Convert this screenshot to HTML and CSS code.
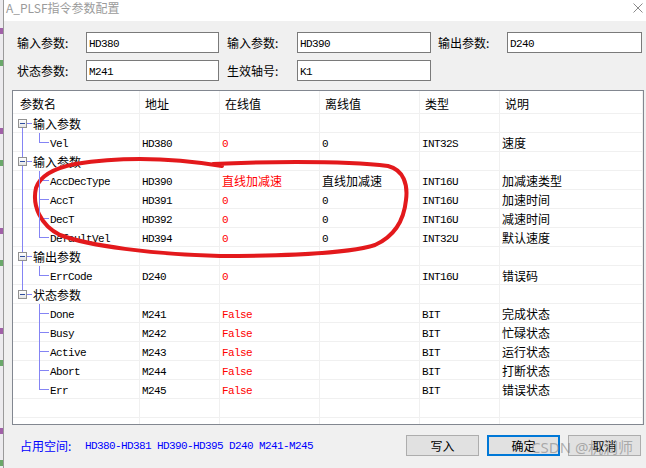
FILE: index.html
```html
<!DOCTYPE html>
<html lang="zh-CN">
<head>
<meta charset="utf-8">
<title>A_PLSF指令参数配置</title>
<link rel="stylesheet" href="styles.css">
</head>
<body>
<div class="screen">
  <div class="behind"></div>
  <div class="window">
    <div class="titlebar">
      <span class="title">A_PLSF指令参数配置</span>
      <svg class="close" width="10" height="10" viewBox="0 0 10 10"><path d="M0.5 0.5 L9.5 9.5 M9.5 0.5 L0.5 9.5" stroke="#8a8a8a" stroke-width="1" fill="none"/></svg>
    </div>
    <div class="content">
      <div class="fields">
        <span class="lbl">输入参数:</span><div class="box m">HD380</div>
        <span class="lbl l2">输入参数:</span><div class="box m">HD390</div>
        <span class="lbl l3">输出参数:</span><div class="box m">D240</div>
        <span class="lbl">状态参数:</span><div class="box m">M241</div>
        <span class="lbl l2">生效轴号:</span><div class="box m">K1</div>
      </div>

      <div class="table">
        <div class="row head">
          <div class="c">参数名</div><div class="c">地址</div><div class="c">在线值</div><div class="c">离线值</div><div class="c">类型</div><div class="c">说明</div>
        </div>

        <div class="row">
          <div class="c grp first"><i class="exp"></i>输入参数</div><div class="c"></div><div class="c"></div><div class="c"></div><div class="c"></div><div class="c"></div>
        </div>
        <div class="row">
          <div class="c leaf end m"><i class="trunk"></i>Vel</div><div class="c m">HD380</div><div class="c m red">0</div><div class="c m">0</div><div class="c m">INT32S</div><div class="c">速度</div>
        </div>

        <div class="row">
          <div class="c grp"><i class="exp"></i>输入参数</div><div class="c"></div><div class="c"></div><div class="c"></div><div class="c"></div><div class="c"></div>
        </div>
        <div class="row">
          <div class="c leaf m"><i class="trunk"></i>AccDecType</div><div class="c m">HD390</div><div class="c red">直线加减速</div><div class="c">直线加减速</div><div class="c m">INT16U</div><div class="c">加减速类型</div>
        </div>
        <div class="row">
          <div class="c leaf m"><i class="trunk"></i>AccT</div><div class="c m">HD391</div><div class="c m red">0</div><div class="c m">0</div><div class="c m">INT16U</div><div class="c">加速时间</div>
        </div>
        <div class="row">
          <div class="c leaf m"><i class="trunk"></i>DecT</div><div class="c m">HD392</div><div class="c m red">0</div><div class="c m">0</div><div class="c m">INT16U</div><div class="c">减速时间</div>
        </div>
        <div class="row">
          <div class="c leaf end m"><i class="trunk"></i>DefaultVel</div><div class="c m">HD394</div><div class="c m red">0</div><div class="c m">0</div><div class="c m">INT32U</div><div class="c">默认速度</div>
        </div>

        <div class="row">
          <div class="c grp"><i class="exp"></i>输出参数</div><div class="c"></div><div class="c"></div><div class="c"></div><div class="c"></div><div class="c"></div>
        </div>
        <div class="row">
          <div class="c leaf end m"><i class="trunk"></i>ErrCode</div><div class="c m">D240</div><div class="c m red">0</div><div class="c m"></div><div class="c m">INT16U</div><div class="c">错误码</div>
        </div>

        <div class="row">
          <div class="c grp last"><i class="exp"></i>状态参数</div><div class="c"></div><div class="c"></div><div class="c"></div><div class="c"></div><div class="c"></div>
        </div>
        <div class="row">
          <div class="c leaf m">Done</div><div class="c m">M241</div><div class="c m red">False</div><div class="c m"></div><div class="c m">BIT</div><div class="c">完成状态</div>
        </div>
        <div class="row">
          <div class="c leaf m">Busy</div><div class="c m">M242</div><div class="c m red">False</div><div class="c m"></div><div class="c m">BIT</div><div class="c">忙碌状态</div>
        </div>
        <div class="row">
          <div class="c leaf m">Active</div><div class="c m">M243</div><div class="c m red">False</div><div class="c m"></div><div class="c m">BIT</div><div class="c">运行状态</div>
        </div>
        <div class="row">
          <div class="c leaf m">Abort</div><div class="c m">M244</div><div class="c m red">False</div><div class="c m"></div><div class="c m">BIT</div><div class="c">打断状态</div>
        </div>
        <div class="row">
          <div class="c leaf end m">Err</div><div class="c m">M245</div><div class="c m red">False</div><div class="c m"></div><div class="c m">BIT</div><div class="c">错误状态</div>
        </div>

        <div class="row">
          <div class="c"></div><div class="c"></div><div class="c"></div><div class="c"></div><div class="c"></div><div class="c"></div>
        </div>
        <div class="row">
          <div class="c"></div><div class="c"></div><div class="c"></div><div class="c"></div><div class="c"></div><div class="c"></div>
        </div>
      </div>

      <div class="footer">
        <div class="usage"><span class="usage-label">占用空间:</span><span class="m">HD380-HD381 HD390-HD395 D240 M241-M245</span></div>
        <div class="buttons">
          <button class="btn">写入</button>
          <button class="btn default">确定</button>
          <button class="btn">取消</button>
        </div>
      </div>
    </div>
  </div>

  <svg class="mark" width="646" height="468" viewBox="0 0 646 468">
    <path d="M213 164 C250 162 340 160 388 166 C404 170 408 185 406 200 C404 220 395 236 375 245 C350 253 300 256 220 256 C150 254 90 246 60 235 C40 225 32 205 36 188 C40 176 55 168 75 164 C100 160 150 154 222 166" fill="none" stroke="#e3191c" stroke-width="4" stroke-linecap="round" stroke-linejoin="round"/>
  </svg>
  <div class="watermark">CSDN @机润师</div>
</div>
</body>
</html>
```

FILE: styles.css
```css
* { box-sizing: border-box; }

body {
  margin: 0;
  width: 646px;
  height: 468px;
  overflow: hidden;
  background: #f0f0f0;
  font-family: "Noto Sans CJK SC", "Microsoft YaHei", sans-serif;
  font-size: 12px;
  color: #000;
}

.screen {
  position: relative;
  display: flex;
  height: 468px;
}

.behind {
  width: 4px;
  border-right: 1px solid #9a9a9a;
  background: repeating-linear-gradient(to bottom,
    #ecebee 0, #ecebee 28px,
    #a060a8 28px, #a060a8 34px,
    #ecebee 34px, #ecebee 60px,
    #6aa86a 60px, #6aa86a 66px,
    #ecebee 66px, #ecebee 100px);
}

.window {
  flex: 1;
  display: flex;
  flex-direction: column;
  background: #f0f0f0;
}

.titlebar {
  height: 21px;
  background: #fff;
  display: flex;
  justify-content: space-between;
  align-items: flex-start;
  padding: 0 3px 0 2px;
}

.title {
  color: #9b9b9b;
  line-height: 16px;
  font-size: 12px;
}

.close {
  margin-top: 3px;
}

.content {
  padding: 11px 2px 0 8px;
}

.fields {
  display: grid;
  grid-template-columns: 69px 133px 78px 134px 76px 135px;
  grid-auto-rows: 21px;
  row-gap: 7px;
  padding-left: 5px;
}

.lbl {
  display: flex;
  align-items: center;
}

.l2 { padding-left: 8px; }
.l3 { padding-left: 7px; }

.box {
  background: #fff;
  border: 1px solid #7a7a7a;
  display: flex;
  align-items: center;
  padding-left: 2px;
  padding-top: 2px;
}

.m {
  font-family: "Liberation Mono", "DejaVu Sans Mono", monospace;
  font-size: 11px;
  letter-spacing: -0.6px;
}

.table {
  margin-top: 9px;
  height: 335px;
  border: 1px solid #828790;
  background: #fff;
  overflow: hidden;
}

.row {
  display: grid;
  grid-template-columns: 127px 80px 100px 100px 80px 143px;
  height: 19px;
}

.c {
  position: relative;
  display: flex;
  align-items: center;
  padding-left: 2px;
  border-right: 1px solid #f0f0f0;
  border-bottom: 1px solid #f0f0f0;
  white-space: nowrap;
}

.c.m {
  padding-top: 3px;
}

.head {
  height: 23px;
}

.head .c {
  padding-left: 5px;
  padding-top: 3px;
}

.head .c:first-child {
  padding-left: 7px;
}

.red { color: #ff0000; }

/* tree */
.grp {
  padding-left: 20px;
}

.grp::before {
  content: "";
  position: absolute;
  left: 9px;
  width: 1px;
  top: 0;
  bottom: -1px;
  background: #8484f4;
}

.grp.first::before { top: 9px; }
.grp.last::before { bottom: 9px; }

.grp::after {
  content: "";
  position: absolute;
  left: 14px;
  width: 5px;
  top: 9px;
  height: 1px;
  background: #8484f4;
}

.exp {
  position: absolute;
  left: 5px;
  top: 5px;
  width: 9px;
  height: 9px;
  border: 1px solid #919191;
  background: linear-gradient(#ffffff, #e4e4e4);
  z-index: 1;
}

.exp::after {
  content: "";
  position: absolute;
  left: 1px;
  top: 3px;
  width: 5px;
  height: 1px;
  background: #2f4f9f;
}

.leaf {
  padding-left: 37px;
}

.leaf::before {
  content: "";
  position: absolute;
  left: 26px;
  width: 1px;
  top: 0;
  bottom: -1px;
  background: #8484f4;
  z-index: 1;
}

.leaf.end::before {
  bottom: auto;
  height: 10px;
}

.leaf::after {
  content: "";
  position: absolute;
  left: 26px;
  top: 9px;
  width: 10px;
  height: 1px;
  background: #8484f4;
}

.trunk {
  position: absolute;
  left: 9px;
  top: 0;
  bottom: -1px;
  width: 1px;
  background: #8484f4;
  z-index: 1;
}

/* footer */
.footer {
  margin-top: 10px;
  display: flex;
  justify-content: space-between;
  align-items: center;
  padding-left: 8px;
}

.usage {
  display: flex;
  align-items: center;
  color: #0000ff;
}

.usage-label {
  width: 65px;
}

.buttons {
  display: flex;
  gap: 8px;
  margin-right: 3px;
}

.btn {
  width: 73px;
  height: 21px;
  padding: 0;
  border: 1px solid #adadad;
  background: #e1e1e1;
  font-family: "Noto Sans CJK SC", sans-serif;
  font-size: 12px;
  color: #000;
}

.btn.default {
  border: 2px solid #0078d7;
}

.mark {
  position: absolute;
  left: 0;
  top: 0;
  pointer-events: none;
}

.watermark {
  position: absolute;
  left: 531px;
  top: 437px;
  font-family: "Noto Sans", sans-serif;
  font-size: 15px;
  line-height: 20px;
  color: rgba(120, 120, 120, 0.55);
  pointer-events: none;
}
```
